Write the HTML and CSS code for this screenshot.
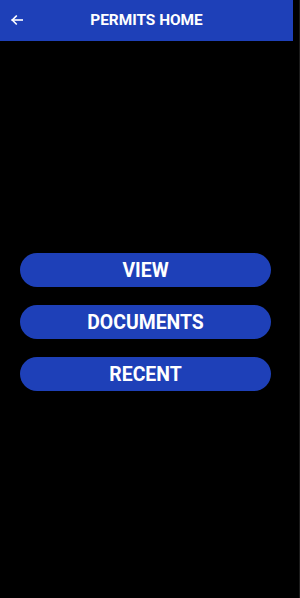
FILE: index.html
```html
<!DOCTYPE html>
<html lang="en">
<head>
  <meta charset="UTF-8" />
  <meta name="viewport" content="width=device-width, initial-scale=1.0" />
  <title>Permits Home</title>
  <link rel="stylesheet" href="styles.css">
</head>
<body>
  <div class="app">
    <header class="top-bar">
      <button class="back-btn" aria-label="Back">
        <svg width="12" height="10" viewBox="0 0 12 10" fill="none" stroke="#fff" stroke-width="1.6" stroke-linecap="square">
          <path d="M11.2 5H1.3"/>
          <path d="M5.2 1.1L1.3 5l3.9 3.9"/>
        </svg>
      </button>
      <h1 class="title">PERMITS HOME</h1>
    </header>
    <main class="menu">
      <button class="menu-btn">VIEW</button>
      <button class="menu-btn">DOCUMENTS</button>
      <button class="menu-btn">RECENT</button>
    </main>
  </div>
  <div class="edge"></div>
</body>
</html>
```

FILE: styles.css
```css
html, body {
  height: 100%;
}
body {
  background-color: #000;
  font-family: Roboto, "Liberation Sans", Arial, sans-serif;
  margin: 0;
  display: flex;
}
.app {
  width: 293px;
  display: flex;
  flex-direction: column;
}
.edge {
  flex: 1;
  border-right: 1px solid #1c1c1c;
}
.top-bar {
  background-color: #1e40b8;
  height: 41px;
  position: relative;
  display: flex;
  align-items: center;
  justify-content: center;
}
.back-btn {
  position: absolute;
  left: 11px;
  top: 15px;
  background: none;
  border: none;
  padding: 0;
  width: 12px;
  height: 10px;
  display: flex;
}
.title {
  margin: 0 0 1px 0;
  color: #fff;
  font-size: 15.4px;
  font-weight: bold;
}
.menu {
  display: flex;
  flex-direction: column;
  gap: 18px;
  padding: 212px 22px 0 20px;
}
.menu-btn {
  background-color: #1e40b8;
  color: #fff;
  border: none;
  height: 34px;
  border-radius: 17px;
  font-family: Roboto, "Liberation Sans", Arial, sans-serif;
  font-size: 19.4px;
  font-weight: bold;
  padding: 0;
  cursor: pointer;
}
```
